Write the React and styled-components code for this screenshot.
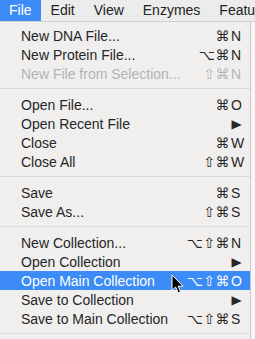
import React from "react";
import styled, { createGlobalStyle } from "styled-components";

const Global = createGlobalStyle`
  html, body { margin: 0; padding: 0; background: #f7f7f7; }
  body { font-family: "Liberation Sans", "DejaVu Sans", Arial, sans-serif; -webkit-font-smoothing: antialiased; }
`;

const Screen = styled.div`
  width: 255px;
  height: 339px;
  overflow: hidden;
  display: flex;
  flex-direction: column;
  background: #f7f7f7;
`;

const MenuBar = styled.div`
  display: flex;
  height: 21px;
  border-bottom: 1px solid #cfcfcf;
  background: #ececec;
  flex-shrink: 0;
  overflow: hidden;
`;

const BarItem = styled.div`
  padding: 0 9px 0 9px;
  line-height: 21px;
  font-size: 14px;
  white-space: nowrap;
  color: ${(p) => (p.$active ? "#ffffff" : "#222222")};
  background: ${(p) => (p.$active ? "#3d8bf6" : "transparent")};
  & + & { margin-left: 1px; }
`;

const Body = styled.div`
  flex: 1;
  display: flex;
  min-height: 0;
`;

const Menu = styled.div`
  position: relative;
  width: 251px;
  flex-shrink: 0;
  background: #f0efee;
  border-right: 1px solid #c7c7c7;
  padding-top: 4px;
  box-sizing: border-box;
`;

const Row = styled.div`
  display: flex;
  align-items: center;
  height: 19px;
  padding: 0 5px 0 21px;
  font-size: 14px;
  white-space: nowrap;
  color: ${(p) => (p.$disabled ? "#b3b3b3" : p.$active ? "#ffffff" : "#262626")};
  background: ${(p) => (p.$active ? "#3d8bf6" : "transparent")};
`;

const Label = styled.span`
  flex: 1;
`;

const Shortcut = styled.span`
  display: flex;
  align-items: center;
  font-size: 14px;
`;

const Mods = styled.span`
  font-family: "DejaVu Sans", sans-serif;
  font-size: 14px;
  letter-spacing: 0.5px;
  margin-right: 1px;
`;

const Key = styled.span`
  display: inline-block;
  width: 14px;
  text-align: left;
`;

const Arrow = styled.span`
  font-family: "DejaVu Sans", sans-serif;
  font-size: 12px;
  margin-right: 4px;
  transform: scaleX(1.1);
`;

const Separator = styled.div`
  height: 12px;
  display: flex;
  align-items: center;
  &::after {
    content: "";
    display: block;
    width: 100%;
    height: 1px;
    margin-top: -1px;
    background: #dadada;
  }
`;

const Cursor = styled.svg`
  position: absolute;
  left: 171px;
  top: 252px;
  width: 13px;
  height: 20px;
`;

const items = [
  { label: "New DNA File...", mods: "⌘", key: "N" },
  { label: "New Protein File...", mods: "⌥⌘", key: "N" },
  { label: "New File from Selection...", mods: "⇧⌘", key: "N", disabled: true },
  "sep",
  { label: "Open File...", mods: "⌘", key: "O" },
  { label: "Open Recent File", arrow: true },
  { label: "Close", mods: "⌘", key: "W" },
  { label: "Close All", mods: "⇧⌘", key: "W" },
  "sep",
  { label: "Save", mods: "⌘", key: "S" },
  { label: "Save As...", mods: "⇧⌘", key: "S" },
  "sep",
  { label: "New Collection...", mods: "⌥⇧⌘", key: "N" },
  { label: "Open Collection", arrow: true },
  { label: "Open Main Collection", mods: "⌥⇧⌘", key: "O", active: true },
  { label: "Save to Collection", arrow: true },
  { label: "Save to Main Collection", mods: "⌥⇧⌘", key: "S" },
  "sep",
];

export default function App() {
  return (
    <Screen>
      <Global />
      <MenuBar>
        <BarItem $active>File</BarItem>
        <BarItem>Edit</BarItem>
        <BarItem>View</BarItem>
        <BarItem>Enzymes</BarItem>
        <BarItem>Featu</BarItem>
      </MenuBar>
      <Body>
        <Menu>
          {items.map((it, i) =>
            it === "sep" ? (
              <Separator key={i} />
            ) : (
              <Row key={i} $disabled={it.disabled} $active={it.active}>
                <Label>{it.label}</Label>
                {it.arrow ? (
                  <Arrow>▶</Arrow>
                ) : (
                  <Shortcut>
                    <Mods>{it.mods}</Mods>
                    <Key>{it.key}</Key>
                  </Shortcut>
                )}
              </Row>
            )
          )}
          <Cursor viewBox="0 0 13 20">
            <path
              d="M1 1 L1 16.5 L4.6 13 L7.2 18.8 L9.6 17.8 L7.1 12.2 L12 12.2 Z"
              fill="#000"
              stroke="#fff"
              strokeWidth="1"
              strokeLinejoin="round"
            />
          </Cursor>
        </Menu>
      </Body>
    </Screen>
  );
}
